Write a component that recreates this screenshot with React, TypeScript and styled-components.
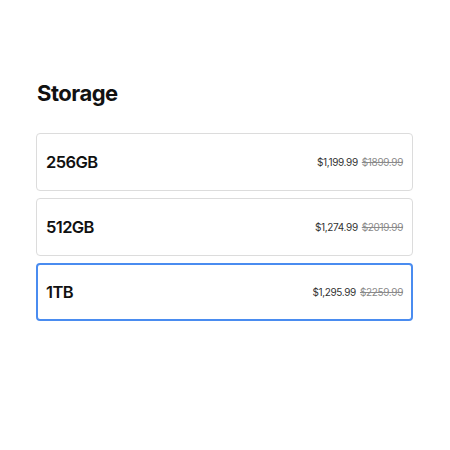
import styled, { createGlobalStyle } from 'styled-components';

const Global = createGlobalStyle`
  body {
    margin: 0;
    background: #fff;
    font-family: Inter, "Noto Sans", sans-serif;
    color: #111;
  }
`;

const Section = styled.section`
  width: 377px;
  padding: 79px 0 0 36px;
`;

const Title = styled.h2`
  margin: 0 0 26px 1px;
  font-size: 22px;
  line-height: 28px;
  font-weight: 700;
  letter-spacing: -0.5px;
`;

const List = styled.div`
  display: flex;
  flex-direction: column;
  gap: 7px;
`;

const Option = styled.button<{ selected?: boolean }>`
  display: flex;
  align-items: center;
  justify-content: space-between;
  height: 58px;
  padding: 0 ${({ selected }) => (selected ? 8 : 9)}px;
  border: ${({ selected }) => (selected ? '2px solid #4a8cf0' : '1px solid #dcdcdc')};
  border-radius: 4px;
  background: #fff;
  font-family: inherit;
  cursor: pointer;
  text-align: left;
`;

const Size = styled.span`
  font-size: 16.5px;
  font-weight: 600;
  letter-spacing: -0.6px;
  color: #111;
`;

const Prices = styled.span`
  display: flex;
  gap: 4px;
  font-size: 10px;
  color: #333;
  letter-spacing: -0.35px;
`;

const Old = styled.s`
  color: #8a8a8a;
`;

const options = [
  { size: '256GB', price: '$1,199.99', old: '$1899.99' },
  { size: '512GB', price: '$1,274.99', old: '$2019.99' },
  { size: '1TB', price: '$1,295.99', old: '$2259.99', selected: true },
];

export default function App() {
  return (
    <>
      <Global />
      <Section>
        <Title>Storage</Title>
        <List>
          {options.map((o) => (
            <Option key={o.size} selected={o.selected}>
              <Size>{o.size}</Size>
              <Prices>
                {o.price} <Old>{o.old}</Old>
              </Prices>
            </Option>
          ))}
        </List>
      </Section>
    </>
  );
}
